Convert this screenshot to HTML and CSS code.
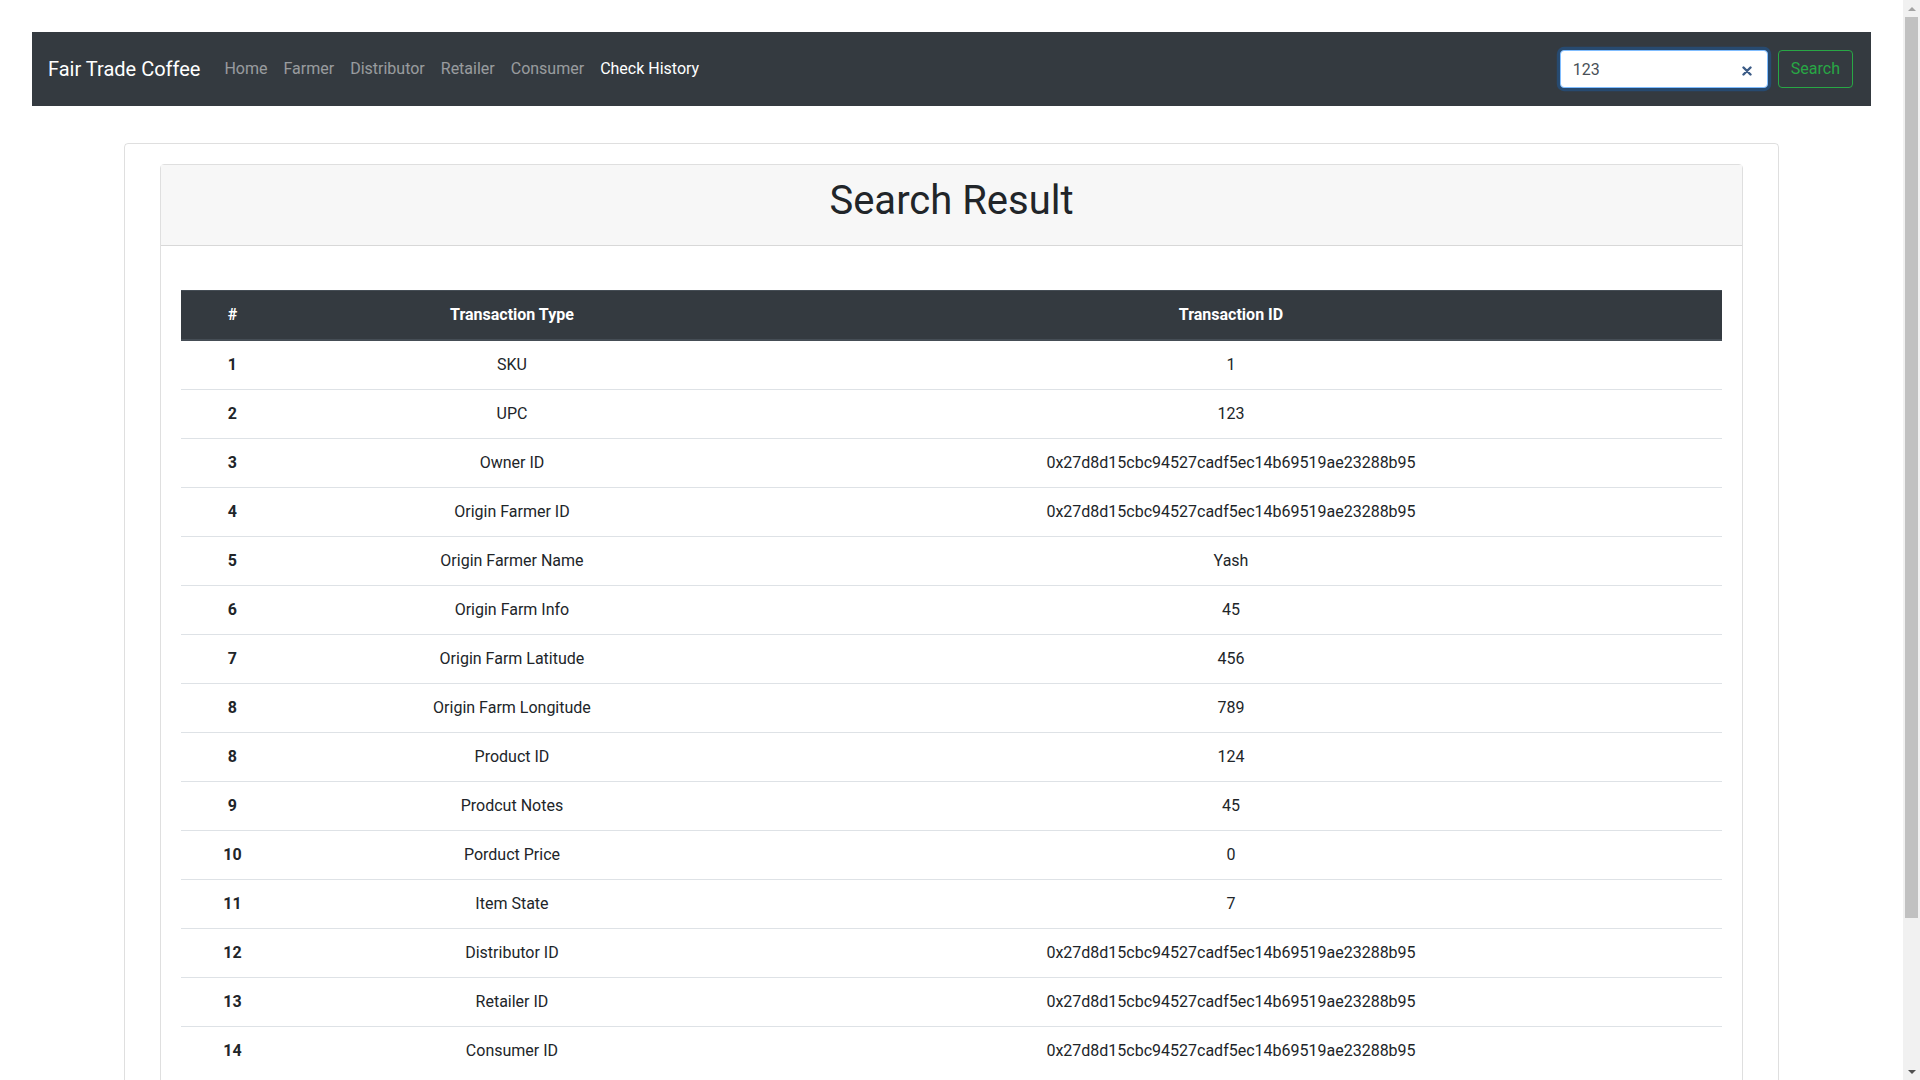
FILE: index.html
```html
<!DOCTYPE html>
<html lang="en">
<head>
<meta charset="utf-8">
<title>Fair Trade Coffee - Check History</title>
<link rel="stylesheet" href="styles.css">
</head>
<body>
<div class="page">
  <nav class="navbar">
    <a class="brand" href="#">Fair Trade Coffee</a>
    <ul class="nav-links">
      <li><a class="nav-link" href="#">Home</a></li>
      <li><a class="nav-link" href="#">Farmer</a></li>
      <li><a class="nav-link" href="#">Distributor</a></li>
      <li><a class="nav-link" href="#">Retailer</a></li>
      <li><a class="nav-link" href="#">Consumer</a></li>
      <li><a class="nav-link active" href="#">Check History</a></li>
    </ul>
    <form class="search-form">
      <div class="search-field">
        <input class="search-input" type="text" value="123" aria-label="Search">
        <span class="clear-icon">
          <svg width="10" height="10" viewBox="0 0 10 10"><path d="M1.5 1.5 L8.5 8.5 M8.5 1.5 L1.5 8.5" stroke="#3b5b86" stroke-width="2.4" stroke-linecap="round"/></svg>
        </span>
      </div>
      <button class="search-btn" type="button">Search</button>
    </form>
  </nav>

  <div class="outer-card">
    <div class="result-card">
      <div class="result-header">
        <h1 class="result-title">Search Result</h1>
      </div>
      <div class="result-body">
        <table class="result-table">
          <thead>
            <tr>
              <th class="col-num">#</th>
              <th class="col-type">Transaction Type</th>
              <th class="col-id">Transaction ID</th>
            </tr>
          </thead>
          <tbody>
            <tr><th>1</th><td>SKU</td><td>1</td></tr>
            <tr><th>2</th><td>UPC</td><td>123</td></tr>
            <tr><th>3</th><td>Owner ID</td><td>0x27d8d15cbc94527cadf5ec14b69519ae23288b95</td></tr>
            <tr><th>4</th><td>Origin Farmer ID</td><td>0x27d8d15cbc94527cadf5ec14b69519ae23288b95</td></tr>
            <tr><th>5</th><td>Origin Farmer Name</td><td>Yash</td></tr>
            <tr><th>6</th><td>Origin Farm Info</td><td>45</td></tr>
            <tr><th>7</th><td>Origin Farm Latitude</td><td>456</td></tr>
            <tr><th>8</th><td>Origin Farm Longitude</td><td>789</td></tr>
            <tr><th>8</th><td>Product ID</td><td>124</td></tr>
            <tr><th>9</th><td>Prodcut Notes</td><td>45</td></tr>
            <tr><th>10</th><td>Porduct Price</td><td>0</td></tr>
            <tr><th>11</th><td>Item State</td><td>7</td></tr>
            <tr><th>12</th><td>Distributor ID</td><td>0x27d8d15cbc94527cadf5ec14b69519ae23288b95</td></tr>
            <tr><th>13</th><td>Retailer ID</td><td>0x27d8d15cbc94527cadf5ec14b69519ae23288b95</td></tr>
            <tr><th>14</th><td>Consumer ID</td><td>0x27d8d15cbc94527cadf5ec14b69519ae23288b95</td></tr>
          </tbody>
        </table>
      </div>
    </div>
  </div>
</div>

<div class="scrollbar" aria-hidden="true">
  <div class="scroll-arrow scroll-up"></div>
  <div class="scroll-track"><div class="scroll-thumb"></div></div>
  <div class="scroll-arrow scroll-down"></div>
</div>
</body>
</html>
```
FILE: styles.css
```css
* {
  box-sizing: border-box;
}

html, body {
  margin: 0;
  padding: 0;
}

body {
  font-family: Roboto, "Liberation Sans", Arial, sans-serif;
  font-size: 16px;
  line-height: 1.5;
  color: #212529;
  background: #fff;
  padding-right: 17px;
}

.page {
  padding: 32px 32px 120px;
}

/* Navbar */
.navbar {
  display: flex;
  align-items: center;
  background: #343a40;
  padding: 18px 18px 18px 16px;
  height: 74px;
}

.brand {
  font-size: 20px;
  line-height: 30px;
  color: #fff;
  text-decoration: none;
  margin-right: 16px;
}

.nav-links {
  display: flex;
  list-style: none;
  margin: 0;
  padding: 0;
}

.nav-link {
  display: block;
  padding: 8px;
  color: rgba(255, 255, 255, 0.5);
  text-decoration: none;
}

.nav-link.active {
  color: #fff;
}

.search-form {
  margin-left: auto;
  display: flex;
  align-items: center;
  gap: 10px;
}

.search-field {
  position: relative;
}

.search-input {
  display: block;
  width: 208px;
  height: 38px;
  padding: 6px 30px 6px 12px;
  font-family: inherit;
  font-size: 16px;
  line-height: 1.5;
  color: #495057;
  background: #fff;
  border: 1px solid #80bdff;
  border-radius: 4px;
  box-shadow: 0 0 0 3.2px rgba(0, 123, 255, 0.25);
  outline: none;
}

.clear-icon {
  position: absolute;
  right: 16px;
  top: 16px;
  width: 10px;
  height: 10px;
  display: flex;
}

.search-btn {
  height: 38px;
  padding: 6px 12px;
  font-family: inherit;
  font-size: 16px;
  line-height: 1.5;
  color: #28a745;
  background: transparent;
  border: 1px solid #28a745;
  border-radius: 4px;
}

/* Cards */
.outer-card {
  width: 90%;
  margin: 37px auto 0;
  border: 1px solid rgba(0, 0, 0, 0.125);
  border-radius: 4px;
  padding: 20px 35px;
}

.result-card {
  border: 1px solid rgba(0, 0, 0, 0.125);
  border-radius: 4px;
}

.result-header {
  background: #f7f7f7;
  border-bottom: 1px solid rgba(0, 0, 0, 0.125);
  padding: 12px 20px;
  text-align: center;
}

.result-title {
  margin: 0 0 8px;
  font-size: 40px;
  font-weight: 400;
  line-height: 1.2;
}

.result-body {
  padding: 44px 20px 20px;
}

/* Table */
.result-table {
  width: 100%;
  border-collapse: collapse;
  margin-bottom: 16px;
}

.result-table th,
.result-table td {
  padding: 12px;
  border-top: 1px solid #dee2e6;
  text-align: center;
  vertical-align: top;
}

.result-table th {
  font-weight: 700;
}

.result-table thead th {
  background: #343a40;
  color: #fff;
  border-top: 1px solid #454d55;
  border-bottom: 2px solid #454d55;
}

.col-num {
  width: 103px;
}

.col-type {
  width: 456px;
}

/* Browser-style vertical scrollbar */
.scrollbar {
  position: fixed;
  top: 0;
  right: 0;
  width: 17px;
  height: 100vh;
  background: #f1f1f1;
  display: flex;
  flex-direction: column;
}

.scroll-arrow {
  height: 17px;
  flex: none;
  display: flex;
  align-items: center;
  justify-content: center;
}

.scroll-arrow::before {
  content: "";
  width: 0;
  height: 0;
  border-left: 4px solid transparent;
  border-right: 4px solid transparent;
}

.scroll-up::before {
  border-bottom: 4px solid #a3a3a3;
}

.scroll-down::before {
  border-top: 4px solid #505050;
}

.scroll-track {
  flex: 1;
  padding: 0 2px;
}

.scroll-thumb {
  height: 901px;
  background: #c1c1c1;
}
```
